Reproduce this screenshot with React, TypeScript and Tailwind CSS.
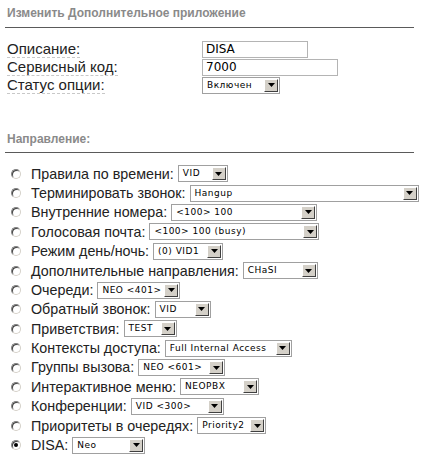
import React from "react"

// Classic (Win2k-style) drop-down, drawn by hand so it looks like the screenshot
const Select = ({ value, width }: { value: string; width: number }) => (
	<div
		className="flex h-[17px] shrink-0 items-center border border-[#a0a0a0] bg-white"
		style={{ width }}
	>
		<span className="flex-1 overflow-hidden whitespace-nowrap pl-[4px] font-['DejaVu_Sans',sans-serif] text-[9px] leading-none tracking-[0.5px] text-black">
			{value}
		</span>
		<span className="mr-px flex h-[13px] w-[14px] shrink-0 items-center justify-center border border-t-white border-l-white border-r-[#404040] border-b-[#404040] bg-[#d4d0c8]">
			<svg width="7" height="4" viewBox="0 0 7 4">
				<path d="M0 0h7L3.5 4z" fill="#000" />
			</svg>
		</span>
	</div>
)

const Radio = ({ checked }: { checked?: boolean }) => (
	<span className="relative mr-[10px] flex h-[10px] w-[10px] shrink-0 items-center justify-center rounded-full border border-[#808080] border-r-[#d4d0c8] border-b-[#d4d0c8] bg-white shadow-[inset_1px_1px_0_#404040]">
		{checked && <span className="h-[4px] w-[4px] rounded-full bg-black" />}
	</span>
)

const destinations: Array<{ label: string; value: string; width: number; checked?: boolean }> = [
	{ label: "Правила по времени:", value: "VID", width: 50 },
	{ label: "Терминировать звонок:", value: "Hangup", width: 229 },
	{ label: "Внутренние номера:", value: "<100> 100", width: 146 },
	{ label: "Голосовая почта:", value: "<100> 100 (busy)", width: 170 },
	{ label: "Режим день/ночь:", value: "(0) VID1", width: 70 },
	{ label: "Дополнительные направления:", value: "CHaSI", width: 75 },
	{ label: "Очереди:", value: "NEO <401>", width: 83 },
	{ label: "Обратный звонок:", value: "VID", width: 56 },
	{ label: "Приветствия:", value: "TEST", width: 53 },
	{ label: "Контексты доступа:", value: "Full Internal Access", width: 127 },
	{ label: "Группы вызова:", value: "NEO <601>", width: 87 },
	{ label: "Интерактивное меню:", value: "NEOPBX", width: 79 },
	{ label: "Конференции:", value: "VID <300>", width: 93 },
	{ label: "Приоритеты в очередях:", value: "Priority2", width: 69 },
	{ label: "DISA:", value: "Neo", width: 73, checked: true },
]

export default function App() {
	return (
		<div className="h-[458px] w-[438px] bg-white font-['Liberation_Sans',Arial,sans-serif] text-[#222]">
			<div className="w-[414px] pl-[5px] pt-[6px]">
				<div className="border-b border-[#5a5a5a] pb-[6px] pl-[2px] text-[12px] font-bold leading-[15px] text-[#8a8a8a]">
					Изменить Дополнительное приложение
				</div>

				<div className="mt-[12px] grid grid-cols-[195px_1fr] pl-[2px] text-[15px] leading-[20px]">
					<div className="flex items-center">
						<span className="border-b border-dashed border-[#c8c8c8] leading-[17px]">Описание:</span>
					</div>
					<div className="flex items-center">
						<div className="flex h-[17px] w-[106px] items-center border border-[#b4b4b4] pl-[3px] font-['DejaVu_Sans',sans-serif] text-[12px] leading-none text-black">
							DISA
						</div>
					</div>
					<div className="flex items-center">
						<span className="border-b border-dashed border-[#c8c8c8] leading-[17px]">Сервисный код:</span>
					</div>
					<div className="flex items-center">
						<div className="flex h-[17px] w-[136px] items-center border border-[#b4b4b4] pl-[3px] font-['DejaVu_Sans',sans-serif] text-[12px] leading-none text-black">
							7000
						</div>
					</div>
					<div className="flex items-center">
						<span className="border-b border-dashed border-[#c8c8c8] leading-[17px]">Статус опции:</span>
					</div>
					<div className="flex items-center">
						<Select value="Включен" width={78} />
					</div>
				</div>

				<div className="mt-[38px] border-b border-[#5a5a5a] pb-[5px] pl-[2px] text-[12px] font-bold leading-[15px] text-[#8a8a8a]">
					Направление:
				</div>

				<div className="mt-[11px] flex flex-col pl-[6px] text-[14.3px]">
					{destinations.map((d) => (
						<div key={d.label} className="flex h-[19.4px] items-center">
							<Radio checked={d.checked} />
							<span className="mr-[4px] whitespace-nowrap leading-none">{d.label}</span>
							<Select value={d.value} width={d.width} />
						</div>
					))}
				</div>
			</div>
		</div>
	)
}
